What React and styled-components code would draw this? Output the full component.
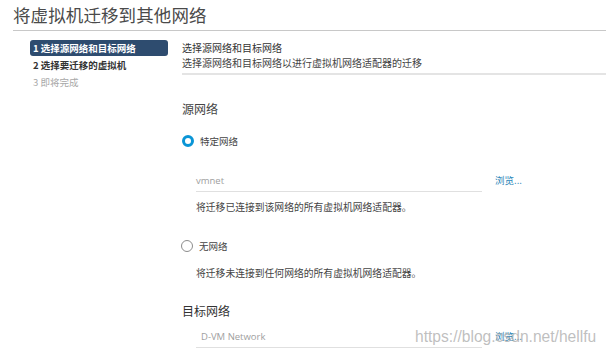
import React from 'react';
import styled, { createGlobalStyle } from 'styled-components';

const GlobalStyle = createGlobalStyle`
  html, body {
    margin: 0;
    padding: 0;
    background: #fff;
  }
  body {
    font-family: "Noto Sans CJK SC", "Noto Sans", sans-serif;
    color: #333;
  }
`;

const steps = [
  { id: 1, label: '1 选择源网络和目标网络', state: 'active' },
  { id: 2, label: '2 选择要迁移的虚拟机', state: 'normal' },
  { id: 3, label: '3 即将完成', state: 'disabled' },
];

const App = () => {
  return (
    <Page>
      <GlobalStyle />
      <Header>将虚拟机迁移到其他网络</Header>
      <Body>
        <Nav>
          {steps.map((s) => (
            <Step key={s.id} $state={s.state}>
              {s.label}
            </Step>
          ))}
        </Nav>
        <Content>
          <Intro>
            <IntroTitle>选择源网络和目标网络</IntroTitle>
            <IntroText>选择源网络和目标网络以进行虚拟机网络适配器的迁移</IntroText>
          </Intro>

          <SectionTitle>源网络</SectionTitle>
          <RadioRow $top={17}>
            <Radio $checked />
            <RadioLabel>特定网络</RadioLabel>
          </RadioRow>
          <Indent>
            <FieldRow>
              <Field>vmnet</Field>
              <Link>浏览...</Link>
            </FieldRow>
            <Hint $top={8}>将迁移已连接到该网络的所有虚拟机网络适配器。</Hint>
          </Indent>
          <RadioRow $top={25}>
            <Radio />
            <RadioLabel>无网络</RadioLabel>
          </RadioRow>
          <Indent>
            <Hint $top={13}>将迁移未连接到任何网络的所有虚拟机网络适配器。</Hint>
          </Indent>

          <SectionTitle $top={23} $dark>目标网络</SectionTitle>
          <Indent>
            <FieldRow $top={9}>
              <Field $pad={5}>D-VM Network</Field>
              <Link>浏览...</Link>
            </FieldRow>
          </Indent>
        </Content>
      </Body>
      <Watermark>https://blog.csdn.net/hellfu</Watermark>
    </Page>
  );
};

export default App;

const Page = styled.div`
  position: relative;
  width: 606px;
  height: 358px;
  overflow: hidden;
  padding-left: 13px;
  box-sizing: border-box;
`;

const Header = styled.div`
  height: 30px;
  line-height: 30px;
  font-size: 17.5px;
  color: #4a4a4a;
  border-bottom: 1px solid #c8c8c8;
  letter-spacing: 0.1px;
`;

const Body = styled.div`
  display: flex;
  padding-top: 9px;
`;

const Nav = styled.div`
  width: 138px;
  margin-left: 17px;
  margin-right: 14px;
  display: flex;
  flex-direction: column;
  gap: 1px;
`;

const Step = styled.div`
  height: 16px;
  line-height: 16px;
  padding-left: 3px;
  border-radius: 3px;
  font-size: 9.5px;
  font-weight: ${(p) => (p.$state === 'disabled' ? 400 : 700)};
  color: ${(p) =>
    p.$state === 'active' ? '#fff' : p.$state === 'disabled' ? '#a8a8a8' : '#333'};
  background: ${(p) => (p.$state === 'active' ? '#2e4c6f' : 'transparent')};
`;

const Content = styled.div`
  flex: 1;
  display: flex;
  flex-direction: column;
`;

const Intro = styled.div`
  border-bottom: 2px solid #e4e4e4;
  padding-bottom: 3px;
`;

const IntroTitle = styled.div`
  font-size: 10px;
  line-height: 15px;
  color: #333;
`;

const IntroText = styled.div`
  font-size: 10px;
  line-height: 15px;
  color: #444;
`;

const SectionTitle = styled.div`
  margin-top: ${(p) => p.$top ?? 26}px;
  font-size: 12px;
  line-height: 16px;
  color: ${(p) => (p.$dark ? '#333' : '#444')};
`;

const RadioRow = styled.div`
  display: flex;
  align-items: center;
  gap: 6px;
  margin-top: ${(p) => p.$top ?? 16}px;
  height: 14px;
`;

const Radio = styled.span`
  width: 12px;
  height: 12px;
  box-sizing: border-box;
  border-radius: 50%;
  margin-left: ${(p) => (p.$checked ? '0' : '-1px')};
  border: ${(p) => (p.$checked ? '3.5px solid #0a95d6' : '1px solid #8c8c8c')};
  background: #fff;
  flex-shrink: 0;
`;

const RadioLabel = styled.span`
  font-size: 9.5px;
  color: #444;
`;

const Indent = styled.div`
  padding-left: 14px;
`;

const FieldRow = styled.div`
  display: flex;
  align-items: center;
  gap: 13px;
  margin-top: ${(p) => p.$top ?? 24}px;
`;

const Field = styled.div`
  width: 286px;
  box-sizing: border-box;
  padding-left: ${(p) => p.$pad ?? 0}px;
  height: 20px;
  line-height: 18px;
  font-size: 9.5px;
  color: #a0a0a0;
  font-family: "Open Sans", "Noto Sans", sans-serif;
  border-bottom: 1px solid #e0e0e0;
`;

const Link = styled.span`
  font-size: 9.5px;
  color: #2a85b8;
  margin-top: -4px;
`;

const Hint = styled.div`
  margin-top: ${(p) => p.$top ?? 11}px;
  font-size: 9.8px;
  line-height: 14px;
  color: #444;
`;

const Watermark = styled.div`
  position: absolute;
  left: 415px;
  top: 328px;
  font-family: "Liberation Sans", Arial, sans-serif;
  font-size: 15.6px;
  color: rgba(170, 170, 170, 0.75);
  pointer-events: none;
  white-space: nowrap;
`;
